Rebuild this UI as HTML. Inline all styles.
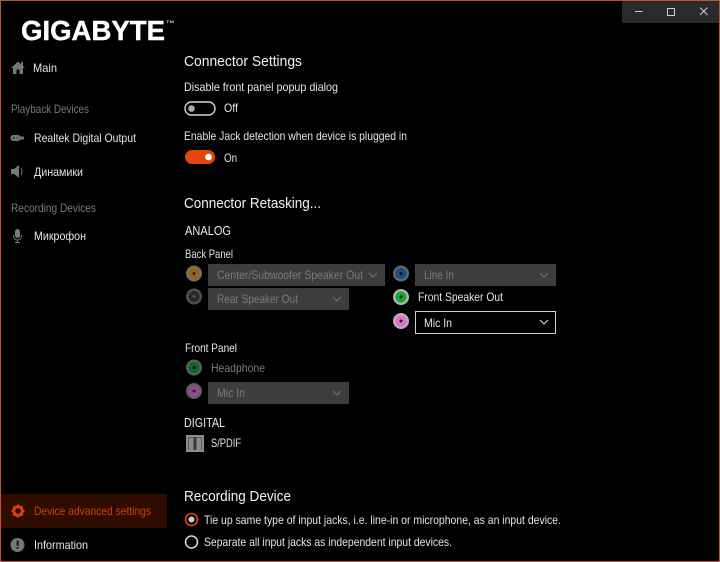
<!DOCTYPE html>
<html><head><meta charset="utf-8"><title>GIGABYTE</title>
<style>
html,body{margin:0;padding:0;background:#000;width:720px;height:562px;overflow:hidden}
svg{display:block}
text{font-family:"Liberation Sans",sans-serif;font-size:12px;fill:#e4e4e4}
.g{fill:#7a7a7a}
.d{fill:#7c7c7c}
.h{font-size:15px;fill:#f2f2f2}
.s{font-size:12.500px;fill:#ececec}
</style></head><body>
<svg width="720" height="562" viewBox="0 0 720 562" xmlns="http://www.w3.org/2000/svg">
<defs>
<filter id="b" x="-5%" y="-5%" width="110%" height="110%"><feGaussianBlur stdDeviation="0.35"/></filter>
</defs>
<rect width="720" height="562" fill="#000"/>
<g filter="url(#b)">
<rect x="622" y="1" width="97" height="22" fill="#2b2b2b"/>
<path d="M635 11.500h7.500" stroke="#ccc" fill="none"/>
<rect x="667.500" y="8.500" width="7" height="7" fill="none" stroke="#ccc"/>
<path d="M700 7.500l7.500 7.500M707.500 7.500l-7.500 7.500" stroke="#ccc" fill="none"/>
<text x="21" y="40" textLength="144" lengthAdjust="spacingAndGlyphs" style="font-size:27.500px;font-weight:bold;fill:#fff;stroke:#fff;stroke-width:.4">GIGABYTE</text>
<text x="166" y="23" textLength="8" lengthAdjust="spacingAndGlyphs" style="font-size:4px;font-weight:bold;fill:#ccc">TM</text>
<path d="M11 68l7-6.500 3 2.800v-2.300h2v4.200l2 1.800h-2v6h-3.500v-4.500h-3v4.500h-3.500v-6z" fill="#777"/>
<text x="33" y="72" textLength="24" lengthAdjust="spacingAndGlyphs">Main</text>
<text class="g" x="11" y="113" textLength="78" lengthAdjust="spacingAndGlyphs">Playback Devices</text>
<g fill="#777"><rect x="10.500" y="135" width="10" height="6" rx="2.500"/><path d="M20 136.500h4v3h-4z"/><circle cx="14" cy="138" r="1.200" fill="#444"/><circle cx="17.500" cy="138" r="1" fill="#444"/></g>
<text x="34" y="142" textLength="102" lengthAdjust="spacingAndGlyphs">Realtek Digital Output</text>
<path d="M11 169h3l5-4v13l-5-4h-3z" fill="#777"/>
<path d="M21 168q2 3.500 0 7" stroke="#777" fill="none"/>
<text x="34" y="176" textLength="49" lengthAdjust="spacingAndGlyphs">Динамики</text>
<text class="g" x="11" y="212" textLength="85" lengthAdjust="spacingAndGlyphs">Recording Devices</text>
<rect x="15" y="229" width="5" height="9" rx="2.500" fill="#777"/>
<path d="M13.500 235q0 5 4 5t4-5M17.500 240v2M15 242.500h5" stroke="#777" fill="none"/>
<text x="34" y="240" textLength="52" lengthAdjust="spacingAndGlyphs">Микрофон</text>
<rect x="1" y="494" width="166" height="34" fill="#2e0f05"/>
<circle cx="18" cy="511" r="4.300" fill="none" stroke="#d8400b" stroke-width="3"/>
<path d="M18 504.500v13M11.500 511h13M13.400 506.400l9.200 9.200M22.600 506.400l-9.200 9.200" stroke="#d8400b" stroke-width="2" stroke-dasharray="2 9 2 0"/>
<text x="34" y="515" textLength="117" lengthAdjust="spacingAndGlyphs" style="fill:#d23c08">Device advanced settings</text>
<circle cx="17.500" cy="545" r="7" fill="#777"/>
<rect x="16.700" y="540.500" width="1.800" height="5.500" fill="#111"/>
<rect x="16.700" y="547" width="1.800" height="1.800" fill="#111"/>
<text x="34" y="549" textLength="54" lengthAdjust="spacingAndGlyphs">Information</text>
<text class="h" x="184" y="66" textLength="118" lengthAdjust="spacingAndGlyphs">Connector Settings</text>
<text x="184" y="91" textLength="154" lengthAdjust="spacingAndGlyphs">Disable front panel popup dialog</text>
<rect x="185" y="102" width="30" height="13" rx="6.500" fill="none" stroke="#d5d5d5" stroke-width="1.400"/>
<circle cx="191.500" cy="108.500" r="3.300" fill="#aaa"/>
<text x="224" y="112" textLength="14" lengthAdjust="spacingAndGlyphs">Off</text>
<text x="184" y="140" textLength="223" lengthAdjust="spacingAndGlyphs">Enable Jack detection when device is plugged in</text>
<rect x="185" y="150" width="30" height="14" rx="7" fill="#e4440b"/>
<circle cx="208.500" cy="157" r="3.300" fill="#fff"/>
<text x="224" y="162" textLength="13" lengthAdjust="spacingAndGlyphs">On</text>
<text class="h" x="184" y="208" textLength="137" lengthAdjust="spacingAndGlyphs">Connector Retasking...</text>
<text class="s" x="185" y="235" textLength="46" lengthAdjust="spacingAndGlyphs">ANALOG</text>
<text x="185" y="258" textLength="48" lengthAdjust="spacingAndGlyphs">Back Panel</text>
<g fill="#3c3c3c">
<rect x="208" y="264" width="177" height="22"/>
<rect x="208" y="288" width="141" height="22"/>
<rect x="415" y="264" width="141" height="22"/>
<rect x="208" y="382" width="141" height="22"/>
</g>
<rect x="415.500" y="311.500" width="140" height="22" fill="#000" stroke="#cfcfcf"/>
<g fill="none" stroke="#777" stroke-width="1">
<path d="M369 273l4 4 4-4M333 297l4 4 4-4M540 273l4 4 4-4M333 391l4 4 4-4"/>
<path d="M540 320l4 4 4-4" stroke="#ddd"/>
</g>
<text class="d" x="217" y="279" textLength="146" lengthAdjust="spacingAndGlyphs">Center/Subwoofer Speaker Out</text>
<text class="d" x="217" y="303" textLength="81" lengthAdjust="spacingAndGlyphs">Rear Speaker Out</text>
<text class="d" x="424" y="279" textLength="30" lengthAdjust="spacingAndGlyphs">Line In</text>
<text x="418" y="301" textLength="85" lengthAdjust="spacingAndGlyphs">Front Speaker Out</text>
<text x="424" y="327" textLength="28" lengthAdjust="spacingAndGlyphs">Mic In</text>
<text x="185" y="352" textLength="52" lengthAdjust="spacingAndGlyphs">Front Panel</text>
<text class="d" x="211" y="372" textLength="54" lengthAdjust="spacingAndGlyphs">Headphone</text>
<text class="d" x="217" y="397" textLength="28" lengthAdjust="spacingAndGlyphs">Mic In</text>
<text class="s" x="184" y="427" textLength="41" lengthAdjust="spacingAndGlyphs">DIGITAL</text>
<text x="211" y="447" textLength="30" lengthAdjust="spacingAndGlyphs">S/PDIF</text>
<circle cx="194" cy="273.500" r="8" fill="#6e6e6e"/><circle cx="194" cy="273.500" r="5.500" fill="#a0620d"/><circle cx="194" cy="273.500" r="1.500" fill="#222"/>
<circle cx="194" cy="296.500" r="8" fill="#505050"/><circle cx="194" cy="296.500" r="5.500" fill="#2a2a2a"/><circle cx="194" cy="296.500" r="1.500" fill="#555"/>
<circle cx="401" cy="273.500" r="8" fill="#666"/><circle cx="401" cy="273.500" r="5.500" fill="#124f86"/><circle cx="401" cy="273.500" r="1.500" fill="#111"/>
<circle cx="401" cy="297" r="8" fill="#a9b5a9"/><circle cx="401" cy="297" r="5.500" fill="#12a832"/><circle cx="401" cy="297" r="1.500" fill="#111"/>
<circle cx="401" cy="321" r="8" fill="#c0a8bd"/><circle cx="401" cy="321" r="5.500" fill="#e070d0"/><circle cx="401" cy="321" r="1.500" fill="#222"/>
<circle cx="194" cy="367.500" r="8" fill="#566056"/><circle cx="194" cy="367.500" r="5.500" fill="#0f6526"/><circle cx="194" cy="367.500" r="1.500" fill="#111"/>
<circle cx="194" cy="391" r="8" fill="#665a64"/><circle cx="194" cy="391" r="5.500" fill="#8e4a92"/><circle cx="194" cy="391" r="1.500" fill="#222"/>
<rect x="186" y="435" width="18" height="17" fill="#8c8c8c"/>
<rect x="188" y="437" width="14" height="13" fill="#5a5a5a"/>
<rect x="189" y="438" width="4.500" height="12" fill="#8a8a8a"/>
<rect x="196.500" y="438" width="4.500" height="12" fill="#8a8a8a"/>
<rect x="193.500" y="437" width="3" height="13" fill="#3a3a3a"/>
<text class="h" x="184" y="501" textLength="107" lengthAdjust="spacingAndGlyphs">Recording Device</text>
<circle cx="191.500" cy="519.500" r="6" fill="none" stroke="#e4440b" stroke-width="1.600"/>
<circle cx="191.500" cy="519.500" r="3" fill="#ccc"/>
<text x="204" y="524" textLength="357" lengthAdjust="spacingAndGlyphs">Tie up same type of input jacks, i.e. line-in or microphone, as an input device.</text>
<circle cx="191.500" cy="542" r="6" fill="none" stroke="#ddd" stroke-width="1.500"/>
<text x="204" y="546" textLength="248" lengthAdjust="spacingAndGlyphs">Separate all input jacks as independent input devices.</text>
</g>
<rect x="0.500" y="0.500" width="719" height="561" fill="none" stroke="#b9543f"/>
</svg>
</body></html>
